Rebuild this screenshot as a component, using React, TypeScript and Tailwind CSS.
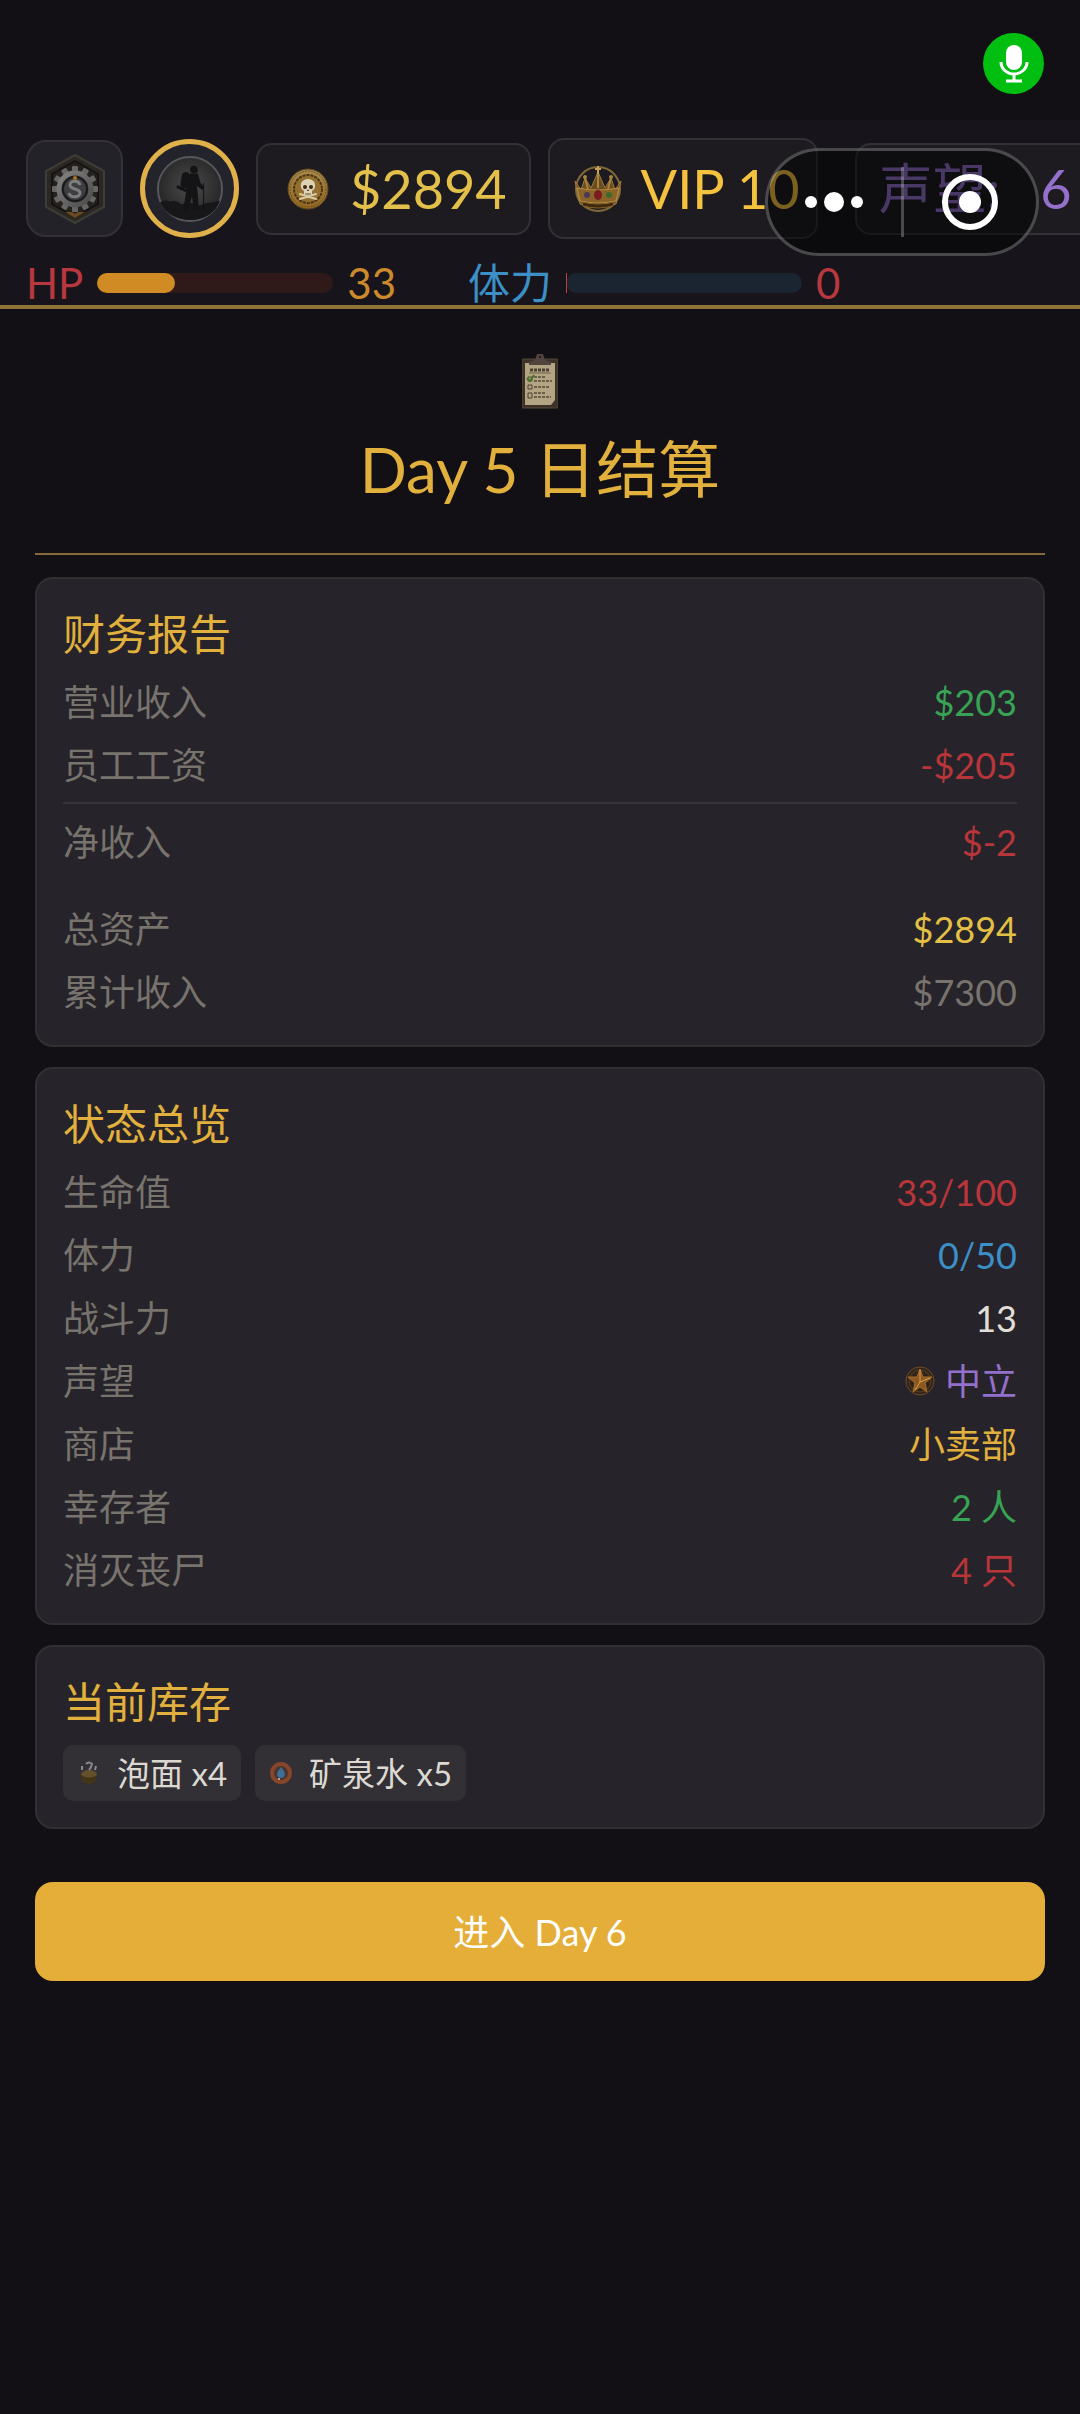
import type { ReactNode } from "react";

const SURVIVAL = [
  { label: "HP", color: "text-[#b8383f]", track: "bg-[#2f1919]", fill: "bg-[#d18b24]", percent: 33, value: "33", valueColor: "text-[#cc8a2c]" },
  { label: "体力", color: "text-[#3c8fc7]", track: "bg-[#1b2431]", fill: "bg-[#c43c3c]", percent: 0, value: "0", valueColor: "text-[#b8383f]" },
];

const FINANCE = [
  { label: "营业收入", value: "$203", color: "text-[#38a354]" },
  { label: "员工工资", value: "-$205", color: "text-[#b83539]" },
];

const ASSETS = [
  { label: "总资产", value: "$2894", color: "text-[#e3bf45]" },
  { label: "累计收入", value: "$7300", color: "text-[#78736d]" },
];

const STATUS = [
  { label: "生命值", value: "33/100", color: "text-[#b83539]" },
  { label: "体力", value: "0/50", color: "text-[#3c8fc7]" },
  { label: "战斗力", value: "13", color: "text-[#e2dfd8]" },
  { label: "声望", value: "中立", color: "text-[#9370cc]", icon: <StarBadge /> },
  { label: "商店", value: "小卖部", color: "text-[#e2b03c]" },
  { label: "幸存者", value: "2 人", color: "text-[#38a354]" },
  { label: "消灭丧尸", value: "4 只", color: "text-[#b83539]" },
];

const STOCK = [
  { name: "泡面", count: 4, icon: <BowlIcon /> },
  { name: "矿泉水", count: 5, icon: <WaterIcon /> },
];

const TEETH = [0, 30, 60, 90, 120, 150, 180, 210, 240, 270, 300, 330];

function GearIcon() {
  return (
    <svg viewBox="0 0 62 70" className="w-[62px] h-[70px]" aria-hidden="true">
      <defs>
        <linearGradient id="steel" x1="0" y1="0" x2="1" y2="1">
          <stop offset="0" stopColor="#858483" />
          <stop offset="1" stopColor="#4b4a4a" />
        </linearGradient>
      </defs>
      <path d="M31 1 60 17v36L31 69 2 53V17Z" fill="#2b2824" stroke="#403c36" strokeWidth="2" />
      <path d="M31 7 54 20v30L31 63 8 50V20Z" fill="#24211e" stroke="#151313" strokeWidth="2" />
      <path d="M21 58h7l3 2 3-2h7l-10 6Z" fill="#6b4a1f" />
      {TEETH.map((deg) => (
        <rect key={deg} x="28" y="12" width="6" height="8" rx="1" fill="#676664" transform={`rotate(${deg} 31 35)`} />
      ))}
      <circle cx="31" cy="35" r="16" fill="#302f30" stroke="url(#steel)" strokeWidth="5" />
      <circle cx="31" cy="35" r="12" fill="#3e3d3f" stroke="#1b1a1b" strokeWidth="2" />
      <path d="M36 31c-1-5-10-5-10 0 0 5 10 3 10 8 0 5-10 5-11 0" fill="none" stroke="#7d7d7f" strokeWidth="3" />
      <circle cx="31" cy="24" r="2" fill="#a9751f" />
    </svg>
  );
}

function SurvivorIcon() {
  return (
    <svg viewBox="0 0 70 70" className="size-[68px]" aria-hidden="true">
      <defs>
        <radialGradient id="fog" cx="50%" cy="45%" r="55%">
          <stop offset="0" stopColor="#4b4b4b" />
          <stop offset="1" stopColor="#242426" />
        </radialGradient>
      </defs>
      <circle cx="35" cy="35" r="33" fill="url(#fog)" stroke="#58585b" strokeWidth="2" />
      <path d="M4 49q6-4 10-1 7-2 12 3 9-4 19 1 8-4 13-3l8-2Q59 66 35 67 12 66 4 49Z" fill="#17171a" />
      <g fill="#141416">
        <circle cx="39" cy="15" r="4" />
        <path d="M35 19h8l3 10 4 4-2 3-6-4 1 8 1 17h-5l-2-14-4 14h-5l3-19-1-7 2-8Z" />
        <path d="M27 19q7-4 8 3l-1 11q-8 3-9-3Z" />
        <path d="m22 31 13 6-1 3-13-6Z" />
      </g>
      <path d="M49 29v28" stroke="#141416" strokeWidth="1" />
    </svg>
  );
}

function CoinIcon() {
  return (
    <svg viewBox="0 0 44 44" className="size-[44px]" aria-hidden="true">
      <defs>
        <linearGradient id="gold" x1="0" y1="0" x2="0" y2="1">
          <stop offset="0" stopColor="#a88a4c" />
          <stop offset="1" stopColor="#93661f" />
        </linearGradient>
      </defs>
      <circle cx="22" cy="22" r="20" fill="url(#gold)" stroke="#5c451e" strokeWidth="1" />
      <circle cx="22" cy="22" r="18" fill="none" stroke="#6e5224" strokeWidth="1" strokeDasharray="2 1" />
      <circle cx="22" cy="22" r="14" fill="#94702f" stroke="#4c3615" strokeWidth="2" strokeDasharray="3 1" />
      <path d="m14 27 16 5M30 27l-16 5" stroke="#d9cba8" strokeWidth="2" strokeLinecap="round" />
      <path d="M22 12c-5 0-8 4-7 8 0 2 2 3 3 4v4h8v-4c1-1 3-2 3-4 1-4-2-8-7-8Z" fill="#dcd2b6" />
      <circle cx="19" cy="20" r="2" fill="#3c2a14" />
      <circle cx="25" cy="20" r="2" fill="#3c2a14" />
      <path d="m22 22 1 2h-2Z" fill="#3c2a14" />
      <path d="M20 26v2M22 26v2M24 26v2" stroke="#6b5636" strokeWidth="1" />
    </svg>
  );
}

function CrownIcon() {
  return (
    <svg viewBox="0 0 50 50" className="size-[50px]" aria-hidden="true">
      <circle cx="25" cy="25" r="22" fill="none" stroke="#80683a" strokeWidth="2" />
      <path d="m2 17 6 9 4-12 6 10 7-16 7 16 6-10 4 12 6-9-5 23q-18 4-36 0Z" fill="#6b4c1f" stroke="#a07c3a" strokeWidth="1" />
      <path d="m12 14 3 11M38 14l-3 11M25 8v16" stroke="#a8843f" strokeWidth="2" />
      <path d="M4 24q21 4 42 0l-3 13q-18 4-36 0Z" fill="#8a6428" stroke="#b98d42" strokeWidth="1" />
      <path d="M9 38q16 4 32 0l-1 4q-15 4-30 0Z" fill="#3c2912" stroke="#8a6428" strokeWidth="1" />
      <path d="M25 2v8M22 5h6" stroke="#c9a155" strokeWidth="2" />
      <circle cx="12" cy="13" r="2" fill="#a8843f" />
      <circle cx="38" cy="13" r="2" fill="#a8843f" />
      <ellipse cx="25" cy="31" rx="4" ry="5" fill="#7a1c20" />
      <circle cx="14" cy="31" r="3" fill="#4b3a55" />
      <circle cx="36" cy="31" r="3" fill="#3e6b2c" />
    </svg>
  );
}

function ClipboardIcon() {
  return (
    <svg viewBox="0 0 36 56" className="w-[36px] h-[56px]" aria-hidden="true">
      <rect x="0" y="6" width="36" height="49" rx="1" fill="#3c3227" stroke="#57493a" strokeWidth="1" />
      <path d="M3 10h30v37l-4 5H3Z" fill="#b3a583" />
      <path d="M7 12V9l6-2 2-6h6l2 6 6 2v3Z" fill="#51443f" />
      <circle cx="18" cy="4" r="1" fill="#151216" />
      <path d="M8 17h20" stroke="#4c4130" strokeWidth="3" strokeDasharray="3 1" />
      <path d="M7 20h22" stroke="#6d6049" strokeWidth="1" />
      <path d="M12 24h11M12 28h18M12 34h16M12 40h12M12 44h17" stroke="#6d6049" strokeWidth="2" strokeDasharray="3 1" />
      <path d="M6 24h4v4H6ZM6 32h4v4H6ZM6 40h4v5H6Z" fill="none" stroke="#4c4130" strokeWidth="1" />
      <path d="m5 25 3 3 4-6" fill="none" stroke="#3f7a25" strokeWidth="2" />
    </svg>
  );
}

function StarBadge() {
  return (
    <svg viewBox="0 0 30 30" className="size-[30px]" aria-hidden="true">
      <circle cx="15" cy="15" r="14" fill="#32241b" stroke="#6e4b25" strokeWidth="1" />
      <circle cx="15" cy="15" r="11" fill="none" stroke="#5c3e1e" strokeWidth="1" />
      <path d="m15 3 3 8h9l-7 6 2 9-7-5-7 5 2-9-7-6h9Z" fill="#8a5820" stroke="#a56f2e" strokeWidth="1" />
      <path d="M15 4v12l-5 8M15 16l10-4" stroke="#daa14c" strokeWidth="1" fill="none" />
    </svg>
  );
}

function BowlIcon() {
  return (
    <svg viewBox="0 0 24 24" className="size-[24px]" aria-hidden="true">
      <ellipse cx="12" cy="14" rx="8" ry="5" fill="#64502a" />
      <path d="M4 14q0 9 8 9t8-9q-8 5-16 0Z" fill="#443418" />
      <path d="M5 5v4M9 3q3-3 6 0-1 4-3 6M19 5l-1 4" stroke="#868b8e" strokeWidth="2" fill="none" />
    </svg>
  );
}

function WaterIcon() {
  return (
    <svg viewBox="0 0 24 24" className="size-[24px]" aria-hidden="true">
      <circle cx="12" cy="12" r="9" fill="#4b352d" stroke="#87462a" strokeWidth="4" />
      <path d="M12 6q6 7 3 10-3 2-6 0-3-3 3-10Z" fill="#3c6f9c" />
      <circle cx="10" cy="18" r="1" fill="#c9c4bc" />
    </svg>
  );
}

type RowProps = { label: string; value: string; color: string; icon?: ReactNode };

function Row({ label, value, color, icon }: RowProps) {
  return (
    <div className="flex h-[63px] items-center justify-between">
      <dt className="text-[#78736d]">{label}</dt>
      <dd className={`flex items-center gap-[10px] ${color}`}>
        {icon}
        {value}
      </dd>
    </div>
  );
}

function Card({ title, children }: { title: string; children: ReactNode }) {
  return (
    <section className="rounded-[18px] border-2 border-[#302f32] bg-[#26242a] px-[26px] pt-[25px] pb-[22px]">
      <h2 className="mb-[6px] flex h-[60px] items-center text-[42px] text-[#e2b03c]">{title}</h2>
      {children}
    </section>
  );
}

export default function App() {
  return (
    <div className="relative min-h-screen overflow-hidden bg-[#121014] font-['Lato','Noto_Sans_CJK_SC',sans-serif] text-[36px] leading-none">
      <div className="flex h-[120px] items-center justify-end pt-[7px] pr-9">
        <span className="flex size-[61px] items-center justify-center rounded-full bg-[#00bf10]">
          <svg viewBox="0 0 30 40" className="h-[40px] w-[30px]" fill="none" stroke="#fff" strokeWidth="3" aria-label="麦克风">
            <rect x="7" y="1" width="16" height="25" rx="8" fill="#fff" stroke="none" />
            <path d="M2 18a13 12 0 0 0 26 0M15 30v7M7 37h16" />
          </svg>
        </span>
      </div>

      <header className="relative border-b-4 border-[#8f7238] bg-[#17151b]">
        <div className="flex h-[137px] items-center gap-[17px] whitespace-nowrap pl-[26px] text-[54px]">
          <button aria-label="设置" className="flex size-[97px] shrink-0 items-center justify-center rounded-[20px] border-2 border-[#333136] bg-[#232228]">
            <GearIcon />
          </button>
          <button aria-label="角色" className="flex size-[99px] shrink-0 items-center justify-center rounded-full border-[5px] border-[#e0b04a] bg-[#22232b]">
            <SurvivorIcon />
          </button>
          <div className="flex h-[92px] shrink-0 items-center gap-5 rounded-[16px] border-2 border-[#333136] bg-[#1d1b20] pr-[22px] pl-[28px] text-[#e3c04a]">
            <CoinIcon />
            $2894
          </div>
          <div className="flex h-[101px] shrink-0 items-center gap-[18px] rounded-[16px] border-2 border-[#333136] bg-[#1d1b20] pr-[16px] pl-[23px] text-[#f5c23e]">
            <CrownIcon />
            VIP 10
          </div>
          <div className="ml-5 flex h-[92px] shrink-0 items-center gap-10 rounded-[16px] border-2 border-[#333136] bg-[#1d1b20] px-[22px] text-[#9370cc]">
            <span>声望:</span>
            <span>6</span>
          </div>
        </div>
        <div className="flex h-[48px] items-center gap-[72px] pt-[3px] pl-[26px] text-[42px]">
          {SURVIVAL.map((stat) => (
            <div key={stat.label} className="flex items-center gap-[14px]">
              <span className={stat.color}>{stat.label}</span>
              <span className={`h-[20px] w-[236px] rounded-full ${stat.track}`}>
                <span
                  className={`block h-full min-w-px ${stat.percent > 0 ? "rounded-full" : ""} ${stat.fill}`}
                  style={{ width: `${stat.percent}%` }}
                />
              </span>
              <span className={stat.valueColor}>{stat.value}</span>
            </div>
          ))}
        </div>

        {/* floating mini-program capsule */}
        <div className="absolute top-[28px] right-[41px] flex h-[108px] w-[274px] items-center rounded-full border-[3px] border-white/25 bg-black/50">
          <button aria-label="更多" className="flex h-full flex-1 items-center justify-center gap-[7px]">
            <span className="size-[12px] rounded-full bg-white" />
            <span className="size-[20px] rounded-full bg-white" />
            <span className="size-[12px] rounded-full bg-white" />
          </button>
          <span className="h-[70px] w-[3px] bg-white/25" />
          <button aria-label="关闭" className="flex h-full flex-1 items-center justify-center">
            <span className="flex size-[56px] items-center justify-center rounded-full border-[6px] border-white">
              <span className="size-[22px] rounded-full bg-white" />
            </span>
          </button>
        </div>
      </header>

      <main className="px-[35px]">
        <div className="flex h-[246px] flex-col items-center border-b-2 border-[#86693a] pt-[44px]">
          <ClipboardIcon />
          <h1 className="mt-[29px] text-[62px] text-[#e2b03c]">Day 5 日结算</h1>
        </div>

        <div className="mt-[22px] flex flex-col gap-5">
          <Card title="财务报告">
            <dl>
              {FINANCE.map((row) => (
                <Row key={row.label} {...row} />
              ))}
              <div className="mt-[6px] border-t-2 border-[#353338] pt-[6px]">
                <Row label="净收入" value="$-2" color="text-[#b83539]" />
              </div>
              <div className="mt-6">
                {ASSETS.map((row) => (
                  <Row key={row.label} {...row} />
                ))}
              </div>
            </dl>
          </Card>

          <Card title="状态总览">
            <dl>
              {STATUS.map((row) => (
                <Row key={row.label} {...row} />
              ))}
            </dl>
          </Card>

          <Card title="当前库存">
            <ul className="mt-[13px] mb-1 flex gap-[14px] text-[33px] text-[#dcd9d2]">
              {STOCK.map((item) => (
                <li key={item.name} className="flex h-[56px] items-center gap-4 rounded-[10px] bg-[#322f35] px-[14px]">
                  {item.icon}
                  {item.name} x{item.count}
                </li>
              ))}
            </ul>
          </Card>
        </div>

        <button className="mt-[53px] h-[99px] w-full rounded-[18px] bg-[#e4ae38] text-white">进入 Day 6</button>
      </main>
    </div>
  );
}
